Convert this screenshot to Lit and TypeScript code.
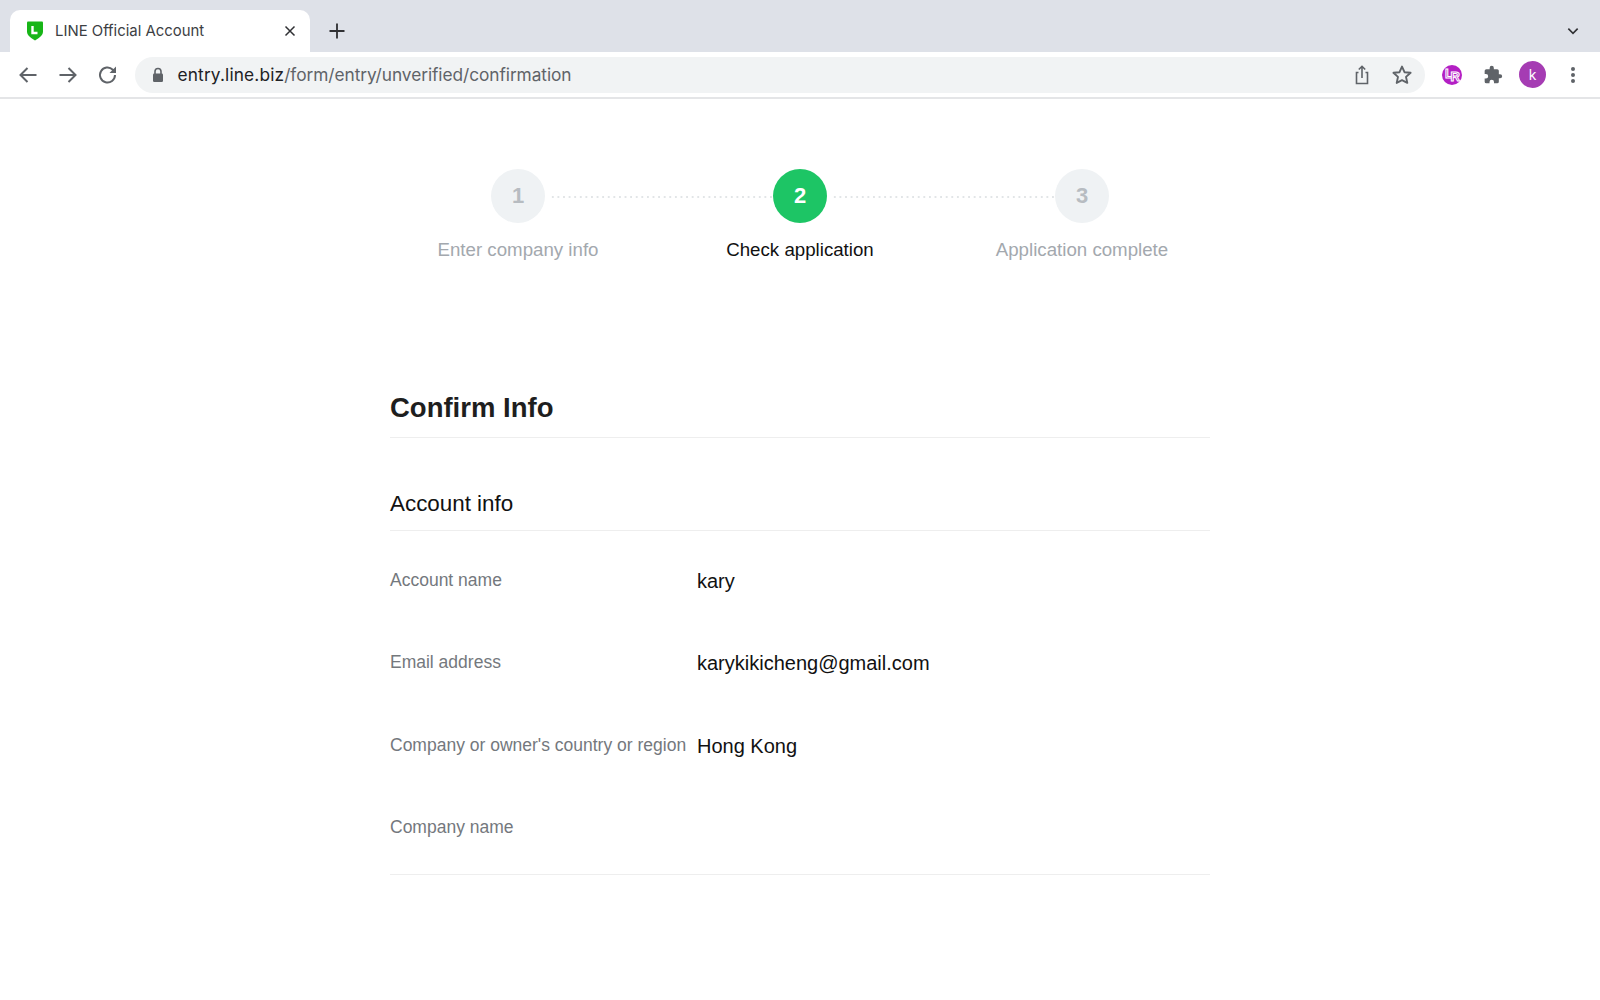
import { LitElement, html, css, svg } from 'lit';
import { customElement } from 'lit/decorators.js';

const steps = [
  { n: '1', label: 'Enter company info', active: false },
  { n: '2', label: 'Check application', active: true },
  { n: '3', label: 'Application complete', active: false },
];

const rows = [
  { label: 'Account name', value: 'kary' },
  { label: 'Email address', value: 'karykikicheng@gmail.com' },
  { label: "Company or owner's country or region", value: 'Hong Kong' },
  { label: 'Company name', value: '' },
];

const icon = (body: unknown, size = 24) => html`<svg width=${size} height=${size} viewBox="0 0 24 24" fill="none">${body}</svg>`;

const backIcon = svg`<path d="M20.5 12H4.5M11.5 5l-7 7 7 7" stroke="#5f6368" stroke-width="2"/>`;
const forwardIcon = svg`<path d="M3.5 12h16M12.5 5l7 7-7 7" stroke="#5f6368" stroke-width="2"/>`;
const reloadIcon = svg`<path d="M19 12a7.5 7.5 0 1 1-2.2-5.3L19 9" stroke="#5f6368" stroke-width="2"/><path d="M20 3.5V10h-6.5z" fill="#5f6368"/>`;
const shareIcon = svg`<path d="M8.5 9.5H6.5v11h11v-11h-2M12 15V3.5M8.8 6.5 12 3.3l3.2 3.2" stroke="#5f6368" stroke-width="1.6"/>`;
const starIcon = svg`<path d="M12 3.6l2.5 5.6 6.1.6-4.6 4.1 1.3 6L12 17.2l-5.3 2.7 1.3-6-4.6-4.1 6.1-.6z" stroke="#5f6368" stroke-width="1.9" stroke-linejoin="round"/>`;
const puzzleIcon = svg`<path d="M20.5 11H19V7a2 2 0 0 0-2-2h-4V3.500a2.500 2.500 0 0 0-5 0V5H4a2 2 0 0 0-2 2v3.800h1.500a2.700 2.700 0 0 1 0 5.400H2V20a2 2 0 0 0 2 2h3.800v-1.500a2.700 2.700 0 0 1 5.400 0V22H17a2 2 0 0 0 2-2v-4h1.500a2.500 2.500 0 0 0 0-5z" fill="#5f6368"/>`;

@customElement('app-root')
export class AppRoot extends LitElement {
  static styles = css`
    :host {
      display: block;
      height: 1000px;
      background: #fff;
      font-family: 'Liberation Sans', Arial, sans-serif;
      overflow: hidden;
    }
    .tabstrip {
      height: 52px;
      background: #dee1e8;
      display: flex;
      align-items: flex-end;
      padding-left: 10px;
      box-sizing: border-box;
    }
    .tab {
      width: 300px;
      height: 42px;
      background: #fff;
      border-radius: 10px 10px 0 0;
      display: flex;
      align-items: center;
      padding: 0 11px 0 16px;
      box-sizing: border-box;
      gap: 11px;
      font-family: Inter, sans-serif;
      font-size: 14.900px;
      color: #3c4043;
    }
    .tab-title { flex: 1; }
    .tab-close { display: flex; }
    .new-tab { display: flex; margin: 0 0 11px 17px; }
    .caret { display: flex; margin: 0 19px 13px auto; }
    .toolbar {
      height: 45px;
      display: flex;
      align-items: center;
      padding: 0 0 0 16px;
      border-bottom: 2px solid #e4e5e7;
    }
    .nav { display: flex; gap: 16px; margin-right: 15px; }
    .nav svg { display: block; }
    .omnibox {
      width: 1290px;
      height: 36px;
      border-radius: 18px;
      background: #f1f3f4;
      display: flex;
      align-items: center;
      padding: 0 11px 0 16px;
      box-sizing: border-box;
      font-family: Inter, sans-serif;
      font-size: 17.300px;
      color: #5f6368;
    }
    .lock { display: flex; margin-right: 12.500px; }
    .host { color: #202124; letter-spacing: 0.150px; }
    .path { letter-spacing: -0.060px; }
    .url { flex: 1; }
    .omni-actions { display: flex; gap: 16px; }
    .tools { display: flex; align-items: center; margin-left: 17px; }
    .lr { display: flex; }
    .lr text {
      font-family: 'Liberation Sans', Arial, sans-serif;
      font-size: 13px;
      font-weight: 700;
      fill: #b31fc4;
      stroke: #fff;
      stroke-width: 1;
    }
    .puzzle { display: flex; margin-left: 21px; }
    .avatar {
      width: 27px;
      height: 27px;
      border-radius: 50%;
      background: #a53cb3;
      color: #fff;
      font-family: Inter, sans-serif;
      font-size: 14px;
      display: flex;
      align-items: center;
      justify-content: center;
      margin-left: 16px;
    }
    .kebab { display: flex; margin-left: 17px; }

    .stepper {
      width: 846px;
      margin: 70px auto 0;
      display: grid;
      grid-template-columns: repeat(3, 282px);
    }
    .step {
      position: relative;
      display: flex;
      flex-direction: column;
      align-items: center;
      gap: 16px;
    }
    .step:not(:last-child)::after {
      content: '';
      position: absolute;
      top: 27px;
      left: calc(50% + 32px);
      width: 222px;
      height: 2px;
      background-image: radial-gradient(circle, #e2e5e7 1px, transparent 1.200px);
      background-size: 5.600px 2px;
      background-repeat: repeat-x;
    }
    .circle {
      width: 54px;
      height: 54px;
      border-radius: 50%;
      background: #eff2f4;
      color: #b7bcc1;
      font-size: 22px;
      font-weight: 700;
      display: flex;
      align-items: center;
      justify-content: center;
    }
    .step-label { font-size: 18.700px; line-height: 22px; color: #a3a8ae; }
    .step.active .circle { background: #1dc565; color: #fff; }
    .step.active .step-label { color: #111; }

    .content {
      width: 820px;
      margin: 118px auto 0;
    }
    h1 {
      margin: 0;
      height: 59px;
      box-sizing: border-box;
      padding-top: 12px;
      font-size: 27.500px;
      line-height: 34px;
      font-weight: 700;
      color: #1e1e1e;
      border-bottom: 1px solid #eeeeee;
    }
    h2 {
      margin: 0;
      height: 93px;
      box-sizing: border-box;
      padding-top: 52px;
      font-size: 22.400px;
      line-height: 28px;
      font-weight: 400;
      color: #111;
      border-bottom: 1px solid #eeeeee;
    }
    .rows {
      padding-top: 37px;
      border-bottom: 1px solid #eeeeee;
    }
    .row {
      display: grid;
      grid-template-columns: 307px 1fr;
      height: 82.300px;
    }
    .row:last-child { height: 59px; }
    .row-label { font-size: 17.500px; line-height: 24px; color: #74787d; white-space: nowrap; }
    .row-value { font-size: 20px; line-height: 26px; color: #111; }
  `;

  render() {
    return html`
      <div class="tabstrip">
        <div class="tab">
          <svg width="18" height="20" viewBox="0 0 18 20">
            <path d="M1 1.500Q1 .5 2 .5h14q1 0 1 1V11q0 4-8 8.500Q1 15 1 11z" fill="#17b517"/>
            <path d="M6.500 5v7h5" stroke="#fff" stroke-width="2.400" fill="none"/>
          </svg>
          <span class="tab-title">LINE Official Account</span>
          <span class="tab-close">${icon(svg`<path d="M6 6l12 12M18 6 6 18" stroke="#303134" stroke-width="2"/>`, 18)}</span>
        </div>
        <span class="new-tab">${icon(svg`<path d="M12 3v18M3 12h18" stroke="#303134" stroke-width="2.200"/>`, 20)}</span>
        <span class="caret">${icon(svg`<path d="M5 8.500l7 7 7-7" stroke="#303134" stroke-width="2.400"/>`, 16)}</span>
      </div>
      <div class="toolbar">
        <div class="nav">${icon(backIcon)}${icon(forwardIcon)}${icon(reloadIcon)}</div>
        <div class="omnibox">
          <span class="lock">
            <svg width="14" height="16" viewBox="0 0 14 16">
              <path d="M4 7V4.500a3 3 0 0 1 6 0V7" stroke="#5f6368" stroke-width="1.600" fill="none"/>
              <rect x="2" y="6.500" width="10" height="8.500" rx="1.200" fill="#5f6368"/>
            </svg>
          </span>
          <span class="url"><span class="host">entry.line.biz</span><span class="path">/form/entry/unverified/confirmation</span></span>
          <span class="omni-actions">${icon(shareIcon)}${icon(starIcon)}</span>
        </div>
        <div class="tools">
          <span class="lr">
            <svg width="20" height="20" viewBox="0 0 20 20">
              <circle cx="10" cy="10" r="10" fill="#b31fc4"/>
              <text x="3" y="13">L</text>
              <text x="8.500" y="16">R</text>
            </svg>
          </span>
          <span class="puzzle">${icon(puzzleIcon, 20)}</span>
          <span class="avatar">k</span>
          <span class="kebab">
            <svg width="20" height="20" viewBox="0 0 20 20" fill="#5f6368">
              <circle cx="10" cy="4" r="2"/><circle cx="10" cy="10" r="2"/><circle cx="10" cy="16" r="2"/>
            </svg>
          </span>
        </div>
      </div>
      <div class="stepper">
        ${steps.map(s => html`
          <div class="step ${s.active ? 'active' : ''}">
            <div class="circle">${s.n}</div>
            <div class="step-label">${s.label}</div>
          </div>
        `)}
      </div>
      <div class="content">
        <h1>Confirm Info</h1>
        <h2>Account info</h2>
        <div class="rows">
          ${rows.map(r => html`
            <div class="row">
              <div class="row-label">${r.label}</div>
              <div class="row-value">${r.value}</div>
            </div>
          `)}
        </div>
      </div>
    `;
  }
}
